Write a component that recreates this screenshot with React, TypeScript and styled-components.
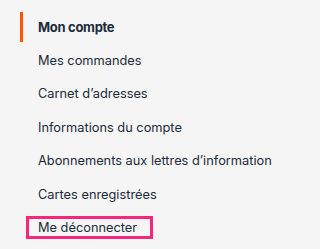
import React from "react";
import styled, { createGlobalStyle } from "styled-components";

const Global = createGlobalStyle`
  html, body { margin: 0; padding: 0; background: #f5f5f5; }
  body { font-family: "Inter", "Open Sans", sans-serif; -webkit-font-smoothing: antialiased; }
`;

const Nav = styled.nav`
  padding: 10px 0 0 20px;
`;

const List = styled.ul`
  list-style: none;
  margin: 0;
  padding: 0;
  display: flex;
  flex-direction: column;
`;

const Item = styled.li<{ $active?: boolean }>`
  height: 33.5px;
  display: flex;
  align-items: center;
  border-left: 3px solid transparent;
  padding-left: 15px;
  font-size: ${(p) => (p.$active ? "13px" : "12.8px")};
  color: #1c2b3b;
  font-weight: ${(p) => (p.$active ? 700 : 400)};
  letter-spacing: ${(p) => (p.$active ? "-0.3px" : "0")};
  white-space: nowrap;
  position: relative;
  &::before {
    content: "";
    display: ${(p) => (p.$active ? "block" : "none")};
    position: absolute;
    left: -3px;
    top: 2px;
    bottom: 2px;
    width: 3px;
    background: #ff5400;
  }
`;

const LogoutItem = styled.li`
  height: 33.5px;
  display: flex;
  align-items: center;
  padding-left: 6px;
`;

const LogoutBox = styled.a`
  display: flex;
  align-items: center;
  width: 127px;
  height: 23px;
  box-sizing: border-box;
  border: 3px solid #f5267b;
  padding-left: 9px;
  font-size: 12.8px;
  color: #1c2b3b;
  text-decoration: none;
  white-space: nowrap;
`;

const items = [
  "Mes commandes",
  "Carnet d’adresses",
  "Informations du compte",
  "Abonnements aux lettres d’information",
  "Cartes enregistrées",
];

export default function App() {
  return (
    <>
      <Global />
      <Nav>
        <List>
          <Item $active>Mon compte</Item>
          {items.map((t) => (
            <Item key={t}>{t}</Item>
          ))}
          <LogoutItem>
            <LogoutBox href="#">Me déconnecter</LogoutBox>
          </LogoutItem>
        </List>
      </Nav>
    </>
  );
}
